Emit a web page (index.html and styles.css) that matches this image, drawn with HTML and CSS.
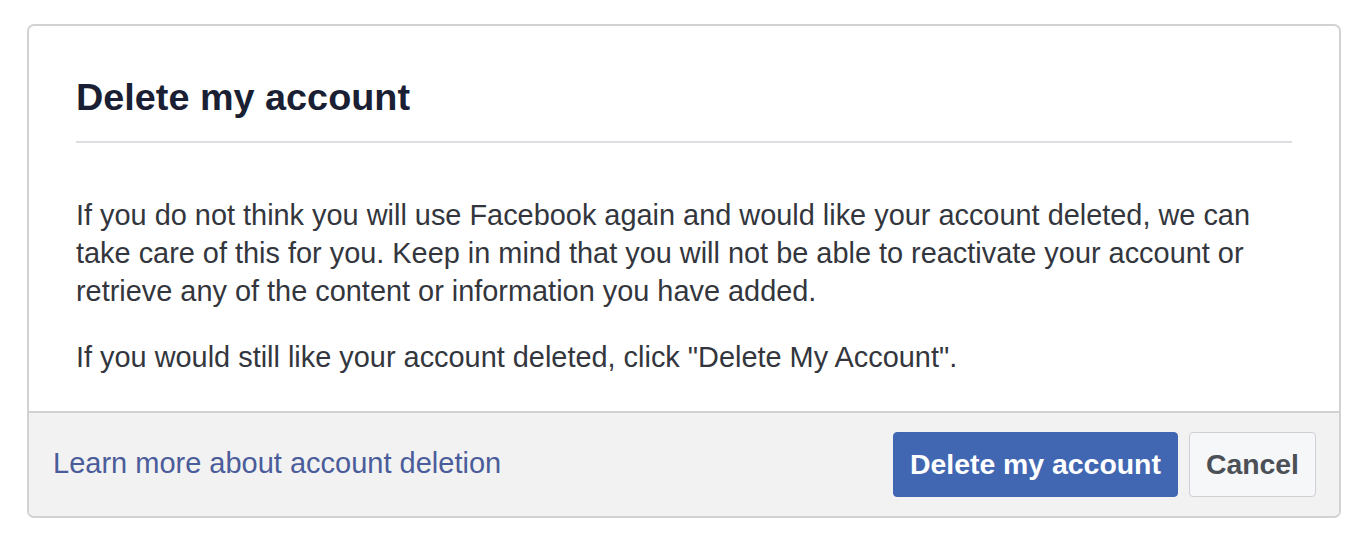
FILE: index.html
```html
<!DOCTYPE html>
<html lang="en">
<head>
<meta charset="utf-8">
<title>Delete my account</title>
<link rel="stylesheet" href="styles.css">
</head>
<body>
<div class="dialog">
  <div class="dialog-header">
    <h2 class="dialog-title">Delete my account</h2>
  </div>
  <div class="dialog-body">
    <p class="para">If you do not think you will use Facebook again and would like your account deleted, we can take care of this for you. Keep in mind that you will not be able to reactivate your account or retrieve any of the content or information you have added.</p>
    <p class="para">If you would still like your account deleted, click "Delete My Account".</p>
  </div>
  <div class="dialog-footer">
    <a class="footer-link" href="#">Learn more about account deletion</a>
    <div class="actions">
      <button class="btn btn-primary" type="button">Delete my account</button>
      <button class="btn btn-secondary" type="button">Cancel</button>
    </div>
  </div>
</div>
</body>
</html>
```

FILE: styles.css
```css
html, body {
  margin: 0;
  padding: 0;
  background: #ffffff;
}

body {
  font-family: "Liberation Sans", Arial, sans-serif;
  padding: 24px 0 0 27px;
}

.dialog {
  box-sizing: border-box;
  width: 1314px;
  border: 2px solid #d2d2d2;
  border-radius: 7px;
  overflow: hidden;
  background: #ffffff;
}

.dialog-header {
  padding: 48px 47px 0 47px;
}

.dialog-title {
  margin: 0;
  font-size: 37.8px;
  line-height: 46px;
  font-weight: bold;
  color: #1a1f33;
  padding-bottom: 21px;
  border-bottom: 2px solid #dcdee1;
}

.dialog-body {
  padding: 53px 47px 35px 47px;
}

.para {
  margin: 0 0 28px 0;
  font-size: 28.9px;
  line-height: 38px;
  color: #33363d;
}

.para:last-child {
  margin-bottom: 0;
}

.dialog-footer {
  display: flex;
  align-items: center;
  justify-content: space-between;
  background: #f2f2f2;
  border-top: 2px solid #d2d2d2;
  padding: 19px 23px 19px 24px;
}

.footer-link {
  font-size: 29px;
  line-height: 38px;
  color: #4a5c9a;
  text-decoration: none;
  margin-top: -4px;
}

.actions {
  display: flex;
  gap: 11px;
}

.btn {
  font-family: "Liberation Sans", Arial, sans-serif;
  font-size: 28.4px;
  font-weight: bold;
  height: 65px;
  padding: 0 16px;
  border-radius: 4px;
  border: 1px solid transparent;
  cursor: pointer;
  line-height: 63px;
}

.btn-primary {
  background: #4267b2;
  border-color: #4267b2;
  color: #ffffff;
}

.btn-secondary {
  background: #f6f7f9;
  border-color: #ced0d4;
  color: #4b4f56;
}
```
